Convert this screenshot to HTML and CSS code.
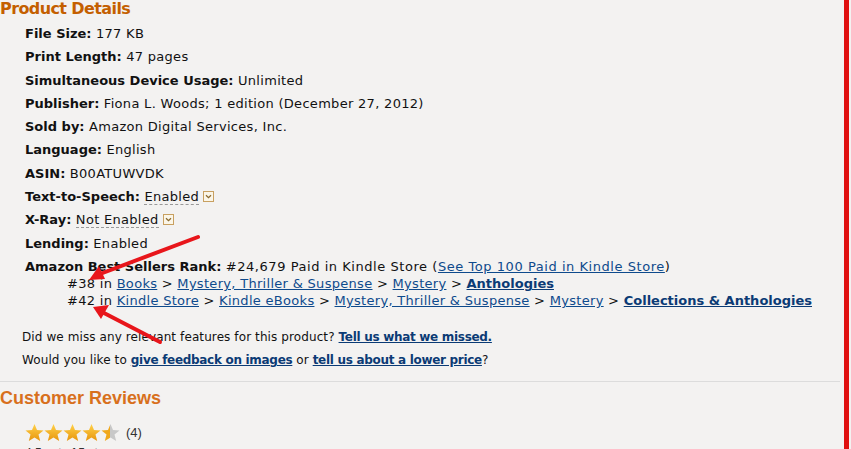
FILE: index.html
```html
<!DOCTYPE html>
<html>
<head>
<meta charset="utf-8">
<link rel="stylesheet" href="styles.css">
</head>
<body>
<div class="frame">
  <div class="main">
    <h2 class="pd-title">Product Details</h2>
    <ul class="details">
      <li><b>File Size:</b> 177 KB</li>
      <li><b>Print Length:</b> 47 pages</li>
      <li><b>Simultaneous Device Usage:</b> Unlimited</li>
      <li><b>Publisher:</b> Fiona L. Woods; 1 edition (December 27, 2012)</li>
      <li><b>Sold by:</b> Amazon Digital Services, Inc.</li>
      <li><b>Language:</b> English</li>
      <li><b>ASIN:</b> B00ATUWVDK</li>
      <li><b>Text-to-Speech:</b> <span class="dotted">Enabled</span> <span class="popbtn"><svg viewBox="0 0 11 11" width="11" height="11"><rect x="0.5" y="0.5" width="10" height="10" fill="#fbf6e8" stroke="#c8a060"/><path d="M3 4.2 L5.5 6.7 L8 4.2" fill="none" stroke="#8a6a30" stroke-width="1.3"/></svg></span></li>
      <li><b>X-Ray:</b> <span class="dotted">Not Enabled</span> <span class="popbtn"><svg viewBox="0 0 11 11" width="11" height="11"><rect x="0.5" y="0.5" width="10" height="10" fill="#fbf6e8" stroke="#c8a060"/><path d="M3 4.2 L5.5 6.7 L8 4.2" fill="none" stroke="#8a6a30" stroke-width="1.3"/></svg></span></li>
      <li><b>Lending:</b> Enabled</li>
      <li class="rank">
        <div><b>Amazon Best Sellers Rank:</b> <span class="wide">#24,679 Paid in Kindle Store (<a href="#">See Top 100 Paid in Kindle Store</a>)</span></div>
        <ul class="subrank">
          <li>#38 in <a href="#">Books</a> &gt; <a href="#">Mystery, Thriller &amp; Suspense</a> &gt; <a href="#">Mystery</a> &gt; <a href="#" class="strong">Anthologies</a></li>
          <li>#42 in <a href="#">Kindle Store</a> &gt; <a href="#">Kindle eBooks</a> &gt; <a href="#">Mystery, Thriller &amp; Suspense</a> &gt; <a href="#">Mystery</a> &gt; <a href="#" class="strong">Collections &amp; Anthologies</a></li>
        </ul>
      </li>
    </ul>
    <div class="feedback">
      <p>Did we miss any relevant features for this product? <a href="#" class="strong">Tell us what we missed.</a></p>
      <p>Would you like to <a href="#" class="strong">give feedback on images</a> or <a href="#" class="strong">tell us about a lower price</a>?</p>
    </div>
    <hr class="sep">
    <h2 class="cr-title">Customer Reviews</h2>
    <div class="stars-row">
      <svg class="stars" viewBox="0 0 96 20" width="96" height="20">
        <defs>
          <linearGradient id="g" x1="0" y1="0" x2="0" y2="1">
            <stop offset="0" stop-color="#ffd24a"/>
            <stop offset="1" stop-color="#e8950c"/>
          </linearGradient>
          <linearGradient id="half" x1="0" y1="0" x2="1" y2="0">
            <stop offset="0.5" stop-color="#f0a81c"/>
            <stop offset="0.5" stop-color="#c8c8c8"/>
          </linearGradient>
          <path id="st" d="M9.5 1 L12 7 L18.5 7.4 L13.5 11.6 L15.2 18 L9.5 14.4 L3.8 18 L5.5 11.6 L0.5 7.4 L7 7 Z"/>
        </defs>
        <use href="#st" x="0" fill="url(#g)"/>
        <use href="#st" x="19" fill="url(#g)"/>
        <use href="#st" x="38" fill="url(#g)"/>
        <use href="#st" x="57" fill="url(#g)"/>
        <use href="#st" x="76" fill="url(#half)"/>
      </svg>
      <span class="count">(4)</span>
    </div>
    <div class="cut">4.5 out of 5 stars</div>
  </div>
  <div class="redbar"></div>
  <svg class="arrows" viewBox="0 0 851 449" width="851" height="449">
    <g stroke="#e8161b" stroke-width="4" stroke-linecap="round" fill="#e8161b">
      <line x1="198" y1="237" x2="100" y2="274"/>
      <line x1="160" y1="342" x2="104" y2="313"/>
    </g>
    <polygon points="89,280 99,266 105,279" fill="#e8161b"/>
    <polygon points="93,307 109,305 101,319" fill="#e8161b"/>
  </svg>
</div>
</body>
</html>
```
FILE: styles.css
```css
html, body {
  margin: 0;
  padding: 0;
  background: #f3f2f1;
}
body {
  font-family: "DejaVu Sans", Verdana, sans-serif;
  font-size: 13px;
  letter-spacing: 0.3px;
  color: #111;
  overflow: hidden;
}
.frame {
  position: relative;
  display: flex;
  width: 851px;
  height: 449px;
}
.main {
  width: 844px;
  flex: none;
}
.redbar {
  width: 5px;
  background: #e01010;
  flex: none;
}
.pd-title {
  margin: 0;
  font-family: "DejaVu Sans", Verdana, sans-serif;
  font-size: 16px;
  font-weight: bold;
  color: #c45f00;
  line-height: 18px;
  letter-spacing: -0.6px;
}
.details {
  list-style: none;
  margin: 8px 0 0 0;
  padding: 0 0 0 25px;
}
.details > li {
  line-height: 16px;
  margin-bottom: 7.3px;
}
b, a.strong {
  font-weight: bold;
  letter-spacing: 0;
}
.wide {
  letter-spacing: 0.55px;
}
.dotted {
  border-bottom: 1px dashed #999;
}
.popbtn svg {
  vertical-align: -1px;
}
.subrank {
  list-style: none;
  margin: 1px 0 0 0;
  padding: 0 0 0 42px;
}
.subrank li {
  line-height: 17px;
}
.subrank li:first-child {
  line-height: 16px;
}
a {
  color: #0e4a8c;
  text-decoration: underline;
}
a.strong {
  color: #0b3b75;
}
.feedback {
  padding-left: 22px;
  margin-top: 20px;
  font-size: 12px;
  letter-spacing: 0.1px;
}
.feedback a.strong {
  letter-spacing: -0.3px;
}
.feedback p {
  margin: 0 0 7px 0;
  line-height: 16px;
}
.sep {
  border: 0;
  border-top: 1px solid #dcdcdc;
  margin: 13px 4px 0 0;
  height: 0;
}
.cr-title {
  margin: 6px 0 0 0;
  font-family: "Liberation Sans", Arial, sans-serif;
  font-size: 18px;
  font-weight: bold;
  letter-spacing: 0;
  color: #d8701c;
  line-height: 20px;
}
.stars-row {
  display: flex;
  align-items: center;
  gap: 5px;
  padding-left: 25px;
  margin-top: 15px;
}
.count {
  font-family: "Liberation Sans", Arial, sans-serif;
  font-size: 13px;
  letter-spacing: 0;
  color: #333;
}
.cut {
  padding-left: 25px;
  font-family: "Liberation Sans", Arial, sans-serif;
  font-size: 12px;
  letter-spacing: 0;
  color: #333;
  margin-top: 3px;
}
.arrows {
  position: absolute;
  left: 0;
  top: 0;
  pointer-events: none;
}
```
